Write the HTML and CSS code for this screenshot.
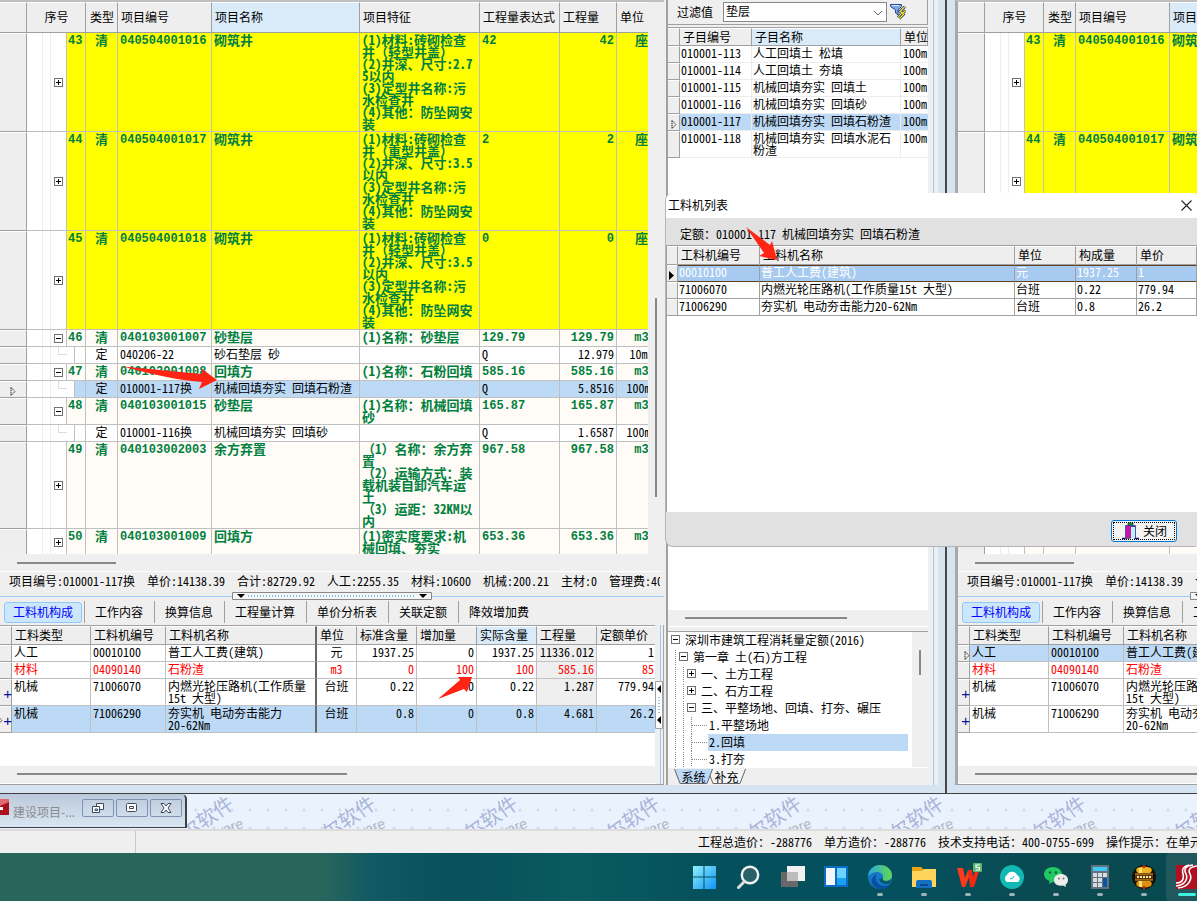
FILE: index.html
```html
<!DOCTYPE html>
<html lang="zh-CN">
<head>
<meta charset="utf-8">
<title>工程计价</title>
<link rel="stylesheet" href="styles.css">
</head>
<body>
<main class="windows">
  <section class="win win-left">
    <div class="pane" data-selected="3"></div>
    <aside class="side">
      <div class="side-body">
        <div class="filter">
          <label for="filter">过滤值</label>
          <span class="combo">
            <select id="filter"><option>垫层</option></select>
            <svg class="chev" viewBox="0 0 10 6" width="10" height="6"><path d="M1 1l4 4 4-4" fill="none" stroke="#666"/></svg>
          </span>
          <button class="filter-btn" aria-label="过滤">
            <svg viewBox="0 0 16 16" width="16" height="16"><path d="M.5.5h11v2L8 6v5L5.500 9V6L.5 2.500z" fill="#7fa8e0" stroke="#24489a"/><path d="M2 1.500h7" stroke="#dce9fb"/><path d="M15 2.500l-5 5 2 1-4 5M15.500 6.500l-3 3 1 1-4 4" fill="none" stroke="#1c2f8a" stroke-width="2.600"/><path d="M15 2.500l-5 5 2 1-4 5M15.500 6.500l-3 3 1 1-4 4" fill="none" stroke="#ffe61a" stroke-width="1.200"/></svg>
          </button>
        </div>
        <div class="side-list">
          <table class="list">
            <colgroup><col class="w12"><col class="w72"><col><col class="w27"></colgroup>
            <thead><tr><th></th><th>子目编号</th><th class="hot">子目名称</th><th>单位</th></tr></thead>
            <tbody>
              <tr><th></th><td>010001-113</td><td>人工回填土 松填</td><td>100m</td></tr>
              <tr><th></th><td>010001-114</td><td>人工回填土 夯填</td><td>100m</td></tr>
              <tr><th></th><td>010001-115</td><td>机械回填夯实 回填土</td><td>100m</td></tr>
              <tr><th></th><td>010001-116</td><td>机械回填夯实 回填砂</td><td>100m</td></tr>
              <tr class="sel"><th><svg class="mark" viewBox="0 0 6 9" width="6" height="9"><path d="M1 .5v8l4-4z" fill="none" stroke="#222" stroke-dasharray="1.500 .7"/></svg></th><td>010001-117</td><td>机械回填夯实 回填石粉渣</td><td>100m</td></tr>
              <tr class="two"><th></th><td>010001-118</td><td>机械回填夯实 回填水泥石<br>粉渣</td><td>100m</td></tr>
            </tbody>
          </table>
        </div>
        <div class="hscroll side-h"><i></i></div>
        <div class="tree-wrap">
          <ul class="tree">
            <li class="l0"><button class="box" aria-label="折叠"></button>深圳市建筑工程消耗量定额(2016)</li>
            <li class="l1"><button class="box" aria-label="折叠"></button>第一章 土(石)方工程</li>
            <li class="l2"><button class="box plus" aria-label="展开"></button>一、土方工程</li>
            <li class="l2"><button class="box plus" aria-label="展开"></button>二、石方工程</li>
            <li class="l2"><button class="box" aria-label="折叠"></button>三、平整场地、回填、打夯、碾压</li>
            <li class="l3"><i></i><span>1.平整场地</span></li>
            <li class="l3 on"><i></i><span>2.回填</span></li>
            <li class="l3"><i></i><span>3.打夯</span></li>
          </ul>
          <div class="tree-v"><i></i></div>
        </div>
        <div class="sheets">
          <button class="sheet active"><svg viewBox="0 0 39 15" width="39" height="15"><path d="M.5 0L6 14.500h27L38.500 0" fill="#bcd9f6" stroke="#666"/></svg>系统</button><button class="sheet"><svg viewBox="0 0 39 15" width="39" height="15"><path d="M.5 0L6 14.500h27L38.500 0" fill="#f4f4f4" stroke="#666"/></svg>补充</button>
        </div>
      </div>
    </aside>
  </section>
  <section class="win win-right">
    <div class="pane" data-selected="0"></div>
  </section>
</main>

<section class="mdi">
  <div class="mini">
    <svg class="mini-logo" viewBox="0 0 9 16" width="9" height="16"><path d="M0 0h9v16H0z" fill="#a8101c"/><path d="M0 0h9v3L0 7z" fill="#e06a70"/><path d="M0 8h3v3H0z" fill="#fff"/></svg>
    <span class="mini-title">建设项目-...</span>
    <button aria-label="还原"><svg viewBox="0 0 14 12" width="14" height="12"><g fill="#fff" stroke="#3c4a60"><path d="M5.500 1.500h7v6h-7z"/><path d="M1.500 4.500h7v6h-7z"/><path d="M4 7h2.500v1.500H4z"/></g></svg></button>
    <button aria-label="最大化"><svg viewBox="0 0 12 10" width="12" height="10"><g fill="#fff" stroke="#3c4a60"><rect x=".5" y=".5" width="10" height="8" rx="1"/><path d="M3.500 3.500h4v2h-4z"/></g></svg></button>
    <button aria-label="关闭"><svg viewBox="0 0 12 10" width="12" height="10"><path d="M1 .5h3l2 2.500 2-2.500h3L8 5l3 4.500H8L6 7 4 9.500H1L4 5z" fill="#fff" stroke="#3c4a60"/></svg></button>
  </div>
  <div class="marks"></div>
</section>

<footer class="status">
  <div class="status-a"></div>
  <div class="status-b">工程总造价：-288776&nbsp; 单方造价：-288776&nbsp; 技术支持电话：400-0755-699&nbsp; 操作提示：在单元格</div>
</footer>

<nav class="taskbar">
  <button aria-label="开始"><svg viewBox="0 0 24 24"><defs><linearGradient id="wn" x1="0" y1="0" x2="1" y2="1"><stop offset="0" stop-color="#8ff0fd"/><stop offset="1" stop-color="#0f93f5"/></linearGradient></defs><path d="M1 1h10.500v10.500H1zM12.500 1H24v10.500H12.500zM1 12.500h10.500V24H1zM12.500 12.500H24V24H12.500z" fill="url(#wn)"/></svg></button>
  <button aria-label="搜索"><svg viewBox="0 0 24 24"><circle cx="14" cy="10" r="8.200" fill="#2a6068" stroke="#f2f2f2" stroke-width="2.400"/><path d="M8.500 16.500l-6 6" stroke="#e0e0e0" stroke-width="3" stroke-linecap="round"/></svg></button>
  <button aria-label="任务视图"><svg viewBox="0 0 24 24"><path d="M1 7h17v15H1z" fill="#686868"/><path d="M7 1h18v15H7z" fill="#f2f2f2"/><path d="M7 7h11v9H7z" fill="#bdbdbd"/></svg></button>
  <button aria-label="小组件"><svg viewBox="0 0 24 24"><path d="M0 1h24v21H0z" fill="#0a6cc4"/><path d="M2 3h9v17H2z" fill="#f3f6fa"/><path d="M13 3h9v10h-9z" fill="#6ad4ff"/><path d="M13 13h9v7h-9z" fill="#1ba1f2"/></svg></button>
  <button class="run" aria-label="Edge"><svg viewBox="0 0 24 24"><defs><linearGradient id="eg" x1="0" y1="0" x2="1" y2="0"><stop offset="0" stop-color="#2aa8e0"/><stop offset="1" stop-color="#62d84e"/></linearGradient></defs><circle cx="12" cy="12" r="12" fill="#1378c8"/><path d="M0 11C1 4 6 0 12 0c7 0 12 5 12 10 0 4-3 6-6 6-3 0-4-1.500-3-3 1-4-3-6-6-6-4 0-7 2-9 4z" fill="url(#eg)"/><path d="M9 9c-3 4-1 11 7 12 3 0 5-1 6-2-4 7-14 6-17 1-3-4-1-9 4-11z" fill="#0b50a0"/><path d="M15 13c-1 1.500 0 3 3 3 2 0 4-1 5-2l-1 4c-4 2-10 1-11-4z" fill="#0a5766"/></svg></button>
  <button class="run" aria-label="资源管理器"><svg viewBox="0 0 24 24"><path d="M0 2h9l2 2h13v18H0z" fill="#e6a313"/><path d="M0 6h10l2-2h12v18H0z" fill="#ffd45a"/><path d="M4 17q0-2 2-2h12q2 0 2 2v6H4z" fill="#1470c0"/><path d="M8 19h8v2H8z" fill="#0a4a8c"/></svg></button>
  <button class="run" aria-label="WPS"><svg viewBox="0 0 24 24"><path d="M1 3h6l2 10 3-8h4l-7 17H6z" fill="#ff3a1c"/><path d="M12 5h4l1 7 3-9h4l-6 19h-4z" fill="#f02a12"/><rect x="17" y="-2" width="9" height="9" rx="1" fill="#58b86a"/><path d="M24 0h-4v2.500h3.500V5h-4" fill="none" stroke="#fff" stroke-width="1.200"/></svg></button>
  <button class="run" aria-label="云"><svg viewBox="0 0 24 24"><circle cx="12" cy="12" r="12" fill="#12b8b4"/><path d="M7 17a4 4 0 0 1 0-7 5.500 5.500 0 0 1 10 0 4 4 0 0 1 1 7z" fill="#fff"/><path d="M10 14q3 0 4-3" stroke="#12b8b4" fill="none"/></svg></button>
  <button class="run" aria-label="微信"><svg viewBox="0 0 24 24"><path d="M9 2c5 0 9 3 9 7.500S14 17 9 17l-4 2 .5-3C2 14.500 0 12 0 9.500 0 5 4 2 9 2z" fill="#22c860"/><path d="M17 9c4 0 7 2.500 7 6 0 2-1 3.500-2.500 4.500l.5 2.500-3-1.500c-6 1-9-2-9-5.500S13 9 17 9z" fill="#ececec"/><circle cx="6" cy="7.500" r="1.200" fill="#0b5f4a"/><circle cx="12" cy="7.500" r="1.200" fill="#0b5f4a"/><circle cx="15" cy="13.500" r="1" fill="#777"/><circle cx="19.500" cy="13.500" r="1" fill="#777"/></svg></button>
  <button class="run" aria-label="计算器"><svg viewBox="0 0 24 24"><path d="M3 0h18v24H3z" fill="#62727f"/><path d="M5 2h14v4H5z" fill="#3fc8f4"/><path d="M5 8h4v4H5zM10 8h4v4h-4zM15 8h4v4h-4zM5 13h4v4H5zM10 13h4v4h-4zM5 18h4v4H5zM10 18h4v4h-4z" fill="#d8dde0"/><path d="M15 13h4v9h-4z" fill="#0c55a0"/></svg></button>
  <button class="run" aria-label="计价软件"><svg viewBox="0 0 24 24"><circle cx="12" cy="12" r="12" fill="#151008"/><path d="M5 3q7-3 14 0 2 3-1 5H6Q3 6 5 3z" fill="#f0b020"/><path d="M6 16h12q3 2 1 5-7 3-14 0-2-3 1-5z" fill="#e09010"/><path d="M7 3h3v5H7zM7 16h3v6H7z" fill="#ffe070"/><path d="M3 9h18v6H3z" fill="#5a3408"/><path d="M5 12h14" stroke="#ffe9a8" stroke-width="2" stroke-dasharray="2 1"/><path d="M3 9h18M3 15h18" stroke="#e8a020"/><path d="M11 0h2v3h-2zM11 21h2v3h-2z" fill="#d02010"/></svg></button>
  <button class="run current" aria-label="斯维尔"><svg viewBox="0 0 24 24"><path d="M0 0h24v24H0z" fill="#b01020"/><path d="M17 0c-9 1-9 5-7 9s0 11-10 12M21 1c-8 1-9 4-7 8s0 13-12 14M13 0C6 2 6 5 7 9s0 9-7 9" fill="none" stroke="#fff" stroke-width="1.600"/></svg></button>
</nav>

<section class="dialog" role="dialog" aria-labelledby="dlg-title">
  <header class="dlg-head"><h2 id="dlg-title">工料机列表</h2><button aria-label="关闭窗口"><svg viewBox="0 0 11 11" width="11" height="11"><path d="M.5.5l10 10M10.500.5l-10 10" stroke="#222" stroke-width="1.100"/></svg></button></header>
  <p class="dlg-sub">定额：010001-117 机械回填夯实 回填石粉渣</p>
  <div class="dlg-list">
    <table class="list">
      <colgroup><col class="w11"><col class="w82"><col><col class="w61"><col class="w61"><col class="w60"></colgroup>
      <thead><tr><th></th><th>工料机编号</th><th>工料机名称</th><th>单位</th><th>构成量</th><th>单价</th></tr></thead>
      <tbody>
        <tr class="cur"><th><svg class="mark" viewBox="0 0 6 9" width="6" height="9"><path d="M0 0v9l5-4.500z"/></svg></th><td>00010100</td><td>普工人工费(建筑)</td><td>元</td><td>1937.25</td><td>1</td></tr>
        <tr><th></th><td>71006070</td><td>内燃光轮压路机(工作质量15t 大型)</td><td>台班</td><td>0.22</td><td>779.94</td></tr>
        <tr><th></th><td>71006290</td><td>夯实机 电动夯击能力20-62Nm</td><td>台班</td><td>0.8</td><td>26.2</td></tr>
      </tbody>
    </table>
  </div>
  <footer class="dlg-foot"><button class="close"><svg viewBox="0 0 18 18" width="18" height="18"><path d="M1 16.500h4V4h9v12.500h4" fill="none" stroke="#10108a" stroke-width="1.400"/><path d="M5 4h5v12H5z" fill="#c814a8"/><path d="M10 5h4v11h-4z" fill="#b8f2f4"/><path d="M7 1h5v2H7z" fill="#18c828" stroke="#111" stroke-width=".6"/><path d="M3 17h7l-2-2z" fill="#666"/></svg>关闭</button></footer>
</section>

<svg class="arrow a1" viewBox="0 0 96 24" width="96" height="24"><path d="M1 1.500L80 9l0-5 15 11-18 9 3-7Q50 15 1 1.500z" fill="#ff2414"/></svg>
<svg class="arrow a2" viewBox="0 0 33 35" width="33" height="35"><path d="M1 1L25 19l2-4 5 19-18-4 5-3z" fill="#ff2414"/></svg>
<svg class="arrow a3" viewBox="0 0 36 24" width="36" height="24"><path d="M1 23L23 4l-2-3 14 0-5 15-3-3z" fill="#ff2414"/></svg>
<script src="app.js"></script>
</body>
</html>
```
FILE: app.js
```js
const well = (kind, depth) => [
  '(1)材料:砖砌检查', `井（${kind}井盖）`, ...depth,
  '(3)定型井名称:污', '水检查井', '(4)其他：防坠网安', '装'
];

const items = [
  { h: 'h99', no: 43, y: 1, code: '040504001016', name: '砌筑井', f: well('轻型', ['(2)井深、尺寸:2.7', '5以内']), e: '42', q: '42', u: '座' },
  { h: 'h99', no: 44, y: 1, code: '040504001017', name: '砌筑井', f: well('重型', ['(2)井深、尺寸:3.5', '以内']), e: '2', q: '2', u: '座' },
  { h: 'h99', no: 45, y: 1, code: '040504001018', name: '砌筑井', f: well('轻型', ['(2)井深、尺寸:3.5', '以内']), e: '0', q: '0', u: '座' },
  { h: 'h17', no: 46, open: 1, code: '040103001007', name: '砂垫层', f: ['(1)名称：砂垫层'], e: '129.79', q: '129.79', u: 'm3' },
  { h: 'h17', sub: 1, code: '040206-22', name: '砂石垫层 砂', f: [], e: 'Q', q: '12.979', u: '10m3' },
  { h: 'h17', no: 47, open: 1, code: '040103001008', name: '回填方', f: ['(1)名称：石粉回填'], e: '585.16', q: '585.16', u: 'm3' },
  { h: 'h17', sub: 1, sel: 1, code: '010001-117换', name: '机械回填夯实 回填石粉渣', f: [], e: 'Q', q: '5.8516', u: '100m3' },
  { h: 'h27', no: 48, open: 1, code: '040103001015', name: '砂垫层', f: ['(1)名称：机械回填', '砂'], e: '165.87', q: '165.87', u: 'm3' },
  { h: 'h17', sub: 1, code: '010001-116换', name: '机械回填夯实 回填砂', f: [], e: 'Q', q: '1.6587', u: '100m3' },
  { h: 'h87', no: 49, code: '040103002003', name: '余方弃置', f: ['（1）名称：余方弃', '置', '（2）运输方式：装', '载机装自卸汽车运', '土', '（3）运距：32KM以', '内'], e: '967.58', q: '967.58', u: 'm3' },
  { h: 'h27', no: 50, code: '040103001009', name: '回填方', f: ['(1)密实度要求:机', '械回填、夯实'], e: '653.36', q: '653.36', u: 'm3' }
];

const resources = [
  ['人工', '00010100', '普工人工费(建筑)', '元', '1937.25', '0', '1937.25', '11336.012', '1'],
  ['材料', '04090140', '石粉渣', 'm3', '0', '100', '100', '585.16', '85'],
  ['机械', '71006070', '内燃光轮压路机(工作质量<br>15t 大型)', '台班', '0.22', '0', '0.22', '1.287', '779.94'],
  ['机械', '71006290', '夯实机 电动夯击能力<br>20-62Nm', '台班', '0.8', '0', '0.8', '4.681', '26.2']
];

const mark = '<svg class="mark" viewBox="0 0 6 9" width="6" height="9"><path d="M1 .5v8l4-4z" fill="none" stroke="#222" stroke-dasharray="1.500 .7"/></svg>';

// Full-width brackets keep their full advance inside half-width text.
const wide = s => s.replace(/[（）]/g, c => `<span class="fw">${c}</span>`);

const itemRow = r => {
  const cls = [r.h, r.sub ? 'sub' : 'item', r.y ? 'yellow' : '', r.sel ? 'sel' : ''].join(' ');
  const tree = r.sub ? '<i class="elbow"></i>'
    : `<button class="box ${r.open ? '' : 'plus'}" aria-label="${r.open ? '折叠' : '展开'}"></button>`;
  return `<tr class="${cls}"><th>${r.sel ? mark : ''}</th><td class="tr">${tree}</td><td class="no num">${r.no || ''}</td>
    <td class="c">${r.sub ? '定' : '清'}</td><td class="num">${r.code}</td><td>${r.name}</td><td>${wide(r.f.join('<br>'))}</td>
    <td class="num">${r.e}</td><td class="num r">${r.q}</td><td class="c ${r.u === '座' ? '' : 'num'}">${r.u}</td></tr>`;
};

const resRow = (r, i, sel) => {
  const cls = [i > 1 ? 'h27' : 'h17', i === 1 ? 'red' : '', i === sel ? 'sel' : ''].join(' ');
  const head = (i > 1 ? '<b>+</b>' : '') + (i === sel ? mark : '');
  const cells = r.map((v, k) => `<td class="${k === 3 ? 'c' : k > 3 ? 'r' : ''}">${v}</td>`).join('');
  return `<tr class="${cls}"><th>${head}</th>${cells}</tr>`;
};

document.querySelectorAll('.pane').forEach(pane => {
  const sel = Number(pane.dataset.selected);
  pane.innerHTML = `
  <div class="grid-row">
    <div class="grid-view"><table class="grid">
      <colgroup><col class="w27"><col class="w40"><col class="w19"><col class="w32"><col class="w94"><col><col class="w120"><col class="w80"><col class="w57"><col class="w50"></colgroup>
      <thead><tr><th></th><th colspan="2" class="c">序号</th><th class="c">类型</th><th>项目编号</th><th class="hot">项目名称</th><th>项目特征</th><th>工程量表达式</th><th>工程量</th><th>单位</th></tr></thead>
      <tbody>${items.map(itemRow).join('')}</tbody>
    </table></div>
    <div class="vscroll"><i></i></div>
  </div>
  <div class="hscroll"><i></i></div>
  <div class="info">项目编号:010001-117换&nbsp; 单价:14138.39&nbsp; 合计:82729.92&nbsp; 人工:2255.35&nbsp; 材料:10600&nbsp; 机械:200.21&nbsp; 主材:0&nbsp; 管理费:400.35</div>
  <div class="split"><svg viewBox="0 0 200 8" width="200" height="8"><path d="M.5.5h199v7H.5z" fill="#f6f6f6" stroke="#888"/><path d="M16 4h168" stroke="#0a84d8" stroke-dasharray="1 2"/><path d="M5 2h8L9 6zM187 2h8l-4 4z"/></svg></div>
  <div class="tabs">${['工料机构成', '工作内容', '换算信息', '工程量计算', '单价分析表', '关联定额', '降效增加费']
    .map((t, i) => `<button class="tab ${i ? '' : 'active'}">${t}</button>`).join('')}</div>
  <div class="lower">
    <div class="lower-main">
      <div class="lower-view"><table class="grid res">
        <colgroup><col class="w12"><col class="w79"><col class="w75"><col><col class="w40"><col class="w60"><col class="w60"><col class="w60"><col class="w60"><col class="w58"></colgroup>
        <thead><tr><th></th><th>工料类型</th><th>工料机编号</th><th>工料机名称</th><th>单位</th><th>标准含量</th><th>增加量</th><th class="hot">实际含量</th><th>工程量</th><th>定额单价</th></tr></thead>
        <tbody>${resources.map((r, i) => resRow(r, i, sel)).join('')}</tbody>
      </table></div>
      <div class="hscroll long"><i></i></div>
    </div>
    <div class="vsplit"><svg viewBox="0 0 8 48" width="8" height="48"><path d="M.5.5h7v47h-7z" fill="#fff" stroke="#a0a0a0"/><path d="M4 16v17" stroke="#0a84d8" stroke-dasharray="1 2"/><path d="M6 4v8L2 8zM6 35v8l-4-4z"/></svg></div>
  </div>`;
});

document.querySelector('.marks').innerHTML =
  '<div class="wm"><b>斯维尔软件</b><i>Software</i></div>'.repeat(8);
```
FILE: styles.css
```css
* { box-sizing: border-box; }
html, body { height: 100%; }
body {
  margin: 0;
  display: flex;
  flex-direction: column;
  position: relative;
  overflow: hidden;
  background: #efefef;
  color: #000;
  font: 12px/12px "Noto Sans CJK SC", sans-serif;
  font-feature-settings: "hwid";
}
button, select { font: inherit; font-feature-settings: inherit; color: inherit; margin: 0; padding: 0; border: 0; background: none; }
h2, p, ul { margin: 0; padding: 0; }
i, b { font-style: normal; }

.windows { flex: 1; min-height: 0; display: flex; border-bottom: 1px solid #404040; }
.win { display: flex; min-width: 0; padding-bottom: 8px; background: #d6e3f1; }
.win-left { flex: 1; padding-right: 7px; border-right: 2px solid #484848; }
.win-right { flex: 0 0 250px; overflow: hidden; padding-left: 8px; }
.win-right .pane { flex: 0 0 667px; border-left: 3px solid #a8a8a8; }
.pane { flex: 1; min-width: 0; display: flex; flex-direction: column; background: #efefef; border-top: 2px solid #c0c0c0; border-bottom: 1px solid #a0a0a0; }

.grid-row { flex: 1; min-height: 0; display: flex; }
.grid-view { flex: 1; min-width: 0; overflow: hidden; background: #fff; }
.vscroll { flex: 0 0 16px; display: flex; padding-left: 7px; }
.vscroll i { width: 2px; height: 199px; margin-top: 296px; background: #888; }
.hscroll { flex: 0 0 17px; padding: 8px 0 0 17px; background: #efefef; }
.hscroll i { display: block; width: 99px; height: 2px; background: #888; }
.hscroll.long { flex-basis: 18px; padding-top: 7px; border-bottom: 1px solid #fff; }
.hscroll.long i { width: 330px; }

table { border-collapse: separate; border-spacing: 0; table-layout: fixed; width: 100%; }
th, td { padding: 1px 2px 0; text-align: left; vertical-align: top; white-space: nowrap; border-right: 1px solid #c0c0c0; border-bottom: 1px solid #c0c0c0; }
th { font-weight: 400; background: #eee; border-color: #a0a0a0; border-top: 1px solid #fff; }
thead th { vertical-align: middle; padding: 0 2px 1px 3px; }
.hot { background: #d9ebf9; }
.c, thead th.c { text-align: center; }
.r { text-align: right; }
.w11 { width: 11px; } .w12 { width: 12px; } .w19 { width: 19px; } .w27 { width: 27px; }
.w32 { width: 32px; } .w40 { width: 40px; } .w50 { width: 50px; } .w57 { width: 57px; }
.w58 { width: 58px; } .w60 { width: 60px; } .w61 { width: 61px; } .w72 { width: 72px; }
.w75 { width: 75px; } .w79 { width: 79px; } .w80 { width: 80px; } .w82 { width: 82px; }
.w94 { width: 94px; } .w120 { width: 120px; }
.h17 { height: 17px; } .h27 { height: 27px; } .h87 { height: 87px; } .h99 { height: 99px; }
.grid-view .grid { width: calc(100% + 19px); }
.grid thead tr { height: 31px; }
.grid.res thead tr { height: 19px; }
.grid tbody th, .list tbody th { padding: 0; vertical-align: middle; text-align: center; }
.item { color: #008040; font-size: 13px; font-weight: 700; background: #fffbf6; }
.item .num { font-family: "Liberation Mono", monospace; font-size: 12px; padding-top: 2px; }
.fw { font-feature-settings: normal; }
.yellow { background: #ff0; }
.sel { background: #bcd9f6; }
.grid .tr { padding: 0 0 0 27px; vertical-align: middle; background: linear-gradient(#eee, #eee) 15px 0 / 1px 100% no-repeat, linear-gradient(#eee, #eee) 23px 0 / 1px 100% no-repeat, #fff; }
.grid .no { padding-left: 1px; padding-right: 0; }
.sub .tr { border-right: 0; vertical-align: top; border-bottom: 1px solid #c0c0c0; padding-left: 31px; }
.sub .no { background: linear-gradient(90deg, #fff 7px, #c0c0c0 7px, #c0c0c0 8px, transparent 8px); }
.elbow { display: block; height: 8px; border-left: 1px solid #ddd; border-bottom: 1px solid #ddd; }
.box { display: block; width: 9px; height: 9px; border: 1px solid #707070; background: linear-gradient(#000, #000) 1px 3px / 5px 1px no-repeat, #fff; flex: none; }
.box.plus { background: linear-gradient(#000, #000) 1px 3px / 5px 1px no-repeat, linear-gradient(#000, #000) 3px 1px / 1px 5px no-repeat, #fff; }
.mark { display: inline-block; vertical-align: middle; }

.info { flex: 0 0 21px; padding-left: 9px; line-height: 18px; border-top: 1px solid #fff; white-space: nowrap; overflow: hidden; margin-right: 4px; }
.split { flex: 0 0 8px; display: flex; justify-content: center; background: linear-gradient(#a0c8f0, #a0c8f0) 0 4px / 100% 1px no-repeat; }
.split svg { flex: none; }
.tabs { flex: 0 0 25px; display: flex; align-items: center; padding: 0 0 1px 4px; white-space: nowrap; overflow: hidden; }
.tab { flex: none; height: 22px; padding: 0 11px 0 10px; border-right: 1px solid #a0a0a0; }
.tab:last-child { border-right: 0; }
.tab.active { margin-right: 2px; padding: 0 8px; border: 1px solid #90c8f6; border-radius: 3px; background: #cce6fc; color: #00f; height: 21px; }
.tab.active + .tab { border-left: 1px solid #a0a0a0; }
.lower { flex: 0 0 159px; display: flex; }
.lower-main { flex: 1; min-width: 0; display: flex; flex-direction: column; border-top: 1px solid #a0a0a0; }
.lower-view { flex: 1; overflow: hidden; background: #fff; }
.res th:nth-child(4), .res td:nth-child(4) { border-right: 2px solid #666; }
.res td:nth-child(10), .res thead th:last-child { border-right: 0; }
.res td:last-child { padding-right: 1px; }
.res tr:not(.sel) td:nth-child(9) { background: #efefef; }
.red { color: #f00; }
.res th b { color: #1010a0; font: 15px/12px "Liberation Sans", sans-serif; vertical-align: middle; }
.res tbody th { direction: rtl; text-align: right; }
.vsplit { flex: 0 0 9px; display: flex; justify-content: center; align-items: center; background: linear-gradient(#a0c8f0, #a0c8f0) 5px 0 / 1px 100% no-repeat; border-right: 1px solid #a8a8a8; }
.vsplit svg { flex: none; }

.side { flex: 0 0 274px; display: flex; padding-left: 2px; background: linear-gradient(#a0c8f0, #a0c8f0) 269px 0 / 1px 100% no-repeat, #efefef; }
.side-body { flex: 1; min-width: 0; margin-right: 10px; border-left: 2px solid #a0a0a0; display: flex; flex-direction: column; }
.filter { flex: 0 0 25px; display: flex; align-items: center; padding: 0 0 0 9px; border-right: 1px solid #a0a0a0; border-bottom: 1px solid #a0a0a0; }
.combo { flex: 1; margin-left: 10px; display: flex; position: relative; }
.combo select { flex: 1; appearance: none; height: 20px; padding: 0 2px 3px; border: 1px solid #888; background: #fff; }
.chev { position: absolute; right: 4px; top: 8px; }
.filter-btn { width: 40px; height: 20px; padding-left: 3px; display: flex; align-items: center; }
.side-list { flex: 1; min-height: 0; margin-top: 2px; border-top: 1px solid #a0a0a0; background: #fff; overflow: hidden; }
.list thead tr { height: 18px; }
.list tbody tr { height: 17px; }
.list tbody .two { height: 27px; }
.side .list td { border-color: #ececec; padding-left: 1px; }
.side .list td:last-child { border-right: 0; padding-left: 2px; padding-right: 0; }
.side .list th:last-child { padding-right: 0; }
.hscroll.side-h { margin-bottom: 4px; padding-top: 7px; border-bottom: 1px solid #fff; }
.side-h i { width: 162px; }
.tree-wrap { flex: 0 0 137px; display: flex; border-top: 1px solid #a0a0a0; border-bottom: 1px solid #fff; overflow: hidden; background: #fff; }
.tree { flex: 1; list-style: none; }
.tree li { height: 17px; display: flex; align-items: center; gap: 5px; padding-bottom: 2px; }
.l0 { padding-left: 3px; }
.l1 { padding-left: 11px; }
.l2 { padding-left: 19px; }
.l3 { padding-left: 23px; }
.l1, .l2, .l3 { background: linear-gradient(#fff 1px, transparent 1px) 0 0 / 100% 2px, linear-gradient(#888, #888) 7px 0 / 1px 100% no-repeat; }
.l2, .l3 { background: linear-gradient(#fff 1px, transparent 1px) 0 0 / 100% 2px, linear-gradient(#888, #888) 7px 0 / 1px 100% no-repeat, linear-gradient(#888, #888) 15px 0 / 1px 100% no-repeat; }
.l3 i { width: 17px; height: 17px; border-left: 1px dotted #888; background: linear-gradient(90deg, #888 1px, transparent 1px) 0 8px / 2px 1px repeat-x; }
.tree .l3 { gap: 0; padding-bottom: 0; }
.l3 span { flex: 1; height: 17px; line-height: 15px; padding-left: 1px; margin-right: 4px; }
.on span { background: #bcd9f6; }
.tree-v { flex: 0 0 16px; background: #efefef; padding: 18px 0 0 7px; }
.tree-v i { display: block; width: 2px; height: 25px; background: #888; }
.sheets { flex: 0 0 17px; display: flex; padding: 1px 0 1px 6px; }
.sheet { position: relative; width: 39px; height: 15px; line-height: 14px; margin-right: -6px; z-index: 0; }
.sheet.active { z-index: 1; }
.sheet svg { position: absolute; left: 0; top: 0; z-index: -1; }

.mdi { flex: 0 0 37px; display: flex; overflow: hidden; background: #eaf2fd; border-bottom: 2px solid #dcdcdc; }
.mini { flex: 0 0 187px; height: 34px; display: flex; align-items: flex-start; padding-top: 4px; gap: 2px; border: solid #404040; border-width: 1px 2px 1px 0; border-top-color: #b8c8da; border-radius: 0 5px 0 0; background: linear-gradient(#bccadb, #d9e6f3); }
.mini-logo { flex: none; }
.mini-title { flex: 1; padding-left: 2px; color: #8c8c8c; line-height: 26px; font-feature-settings: normal; }
.mini button { width: 32px; height: 18px; display: flex; align-items: center; justify-content: center; border: 1px solid #7d92b2; border-radius: 2px; }
.mini button:last-child { margin-right: 3px; }
.marks { flex: 1; display: flex; overflow: hidden; background: radial-gradient(circle, #d3dcea 1px, transparent 2px) 0 7px / 18px 18px; }
.wm { flex: 0 0 142px; position: relative; }
.wm b { position: absolute; left: -48px; top: 21px; width: 110px; font-size: 20px; line-height: 22px; font-weight: 400; color: #aab5da; transform: rotate(-35deg); white-space: nowrap; }
.wm i { position: absolute; left: 2px; top: 30px; font: 14px/16px "Liberation Sans", sans-serif; color: #b0b4c0; transform: rotate(-20deg); }

.status { flex: 0 0 22px; display: flex; justify-content: space-between; background: #efefef; white-space: nowrap; }
.status-a { flex: 0 0 136px; border-right: 1px solid #c8c8c8; }
.status-b { flex: 0 0 499px; line-height: 21px; overflow: hidden; }

.taskbar { flex: 0 0 48px; display: flex; justify-content: flex-end; overflow: hidden; background: linear-gradient(90deg, #28665c 0, #28665c 27%, #115963 31%, #07505c 38%, #0a5a60 48%, #04505c 60%, #05505e 75%, #0a4a50 88%, #084850 100%); }
.taskbar button { flex: 0 0 44px; height: 48px; display: flex; align-items: center; justify-content: center; position: relative; }
.taskbar button:last-child { margin-right: -13px; }
.taskbar svg { width: 24px; height: 24px; overflow: visible; }
.run::after { content: ""; position: absolute; bottom: 5px; left: 19px; width: 6px; height: 3px; border-radius: 2px; background: #9ab4b8; }
.current { background: #20585e; border-radius: 4px; }
.current::after { left: 12px; width: 18px; background: #40f0e0; }

.dialog { position: absolute; left: 665px; right: 0; top: 193px; height: 354px; display: flex; flex-direction: column; border: solid #b4b4b4; border-width: 0 0 1px 1px; border-radius: 8px 3px 3px 8px; overflow: hidden; background: #e1e1e1; }
.dlg-head { flex: 0 0 25px; display: flex; align-items: center; justify-content: space-between; padding: 0 5px 1px 2px; background: #fff; }
.dlg-head h2 { font-size: 12px; font-weight: 400; }
.dlg-head button { display: flex; }
.dlg-sub { flex: 0 0 27px; min-height: 0; height: 27px; padding-left: 14px; line-height: 32px; }
.dlg-list { flex: 1; border-top: 1px solid #a0a0a0; border-left: 1px solid #a0a0a0; background: #fff; overflow: hidden; }
.dialog .list td { border-color: #a0a0a0; padding-left: 1px; }
.dialog .list thead tr { height: 19px; }
.dialog .cur td { background: #a6caf0; color: #fff; border-top: 1px solid #604020; border-bottom-color: #604020; padding-top: 0; }
.dlg-foot { flex: 0 0 34px; display: flex; align-items: center; justify-content: flex-end; padding: 3px 20px 0 0; }
.close { width: 66px; height: 22px; display: flex; align-items: center; justify-content: center; gap: 4px; border: 1px solid #0078d7; border-radius: 3px; background: #f4f4f4; outline: 1px dotted #000; outline-offset: -3px; }

.arrow { position: absolute; }
.a1 { left: 122px; top: 365px; }
.a2 { left: 745px; top: 226px; }
.a3 { left: 437px; top: 676px; }
```
